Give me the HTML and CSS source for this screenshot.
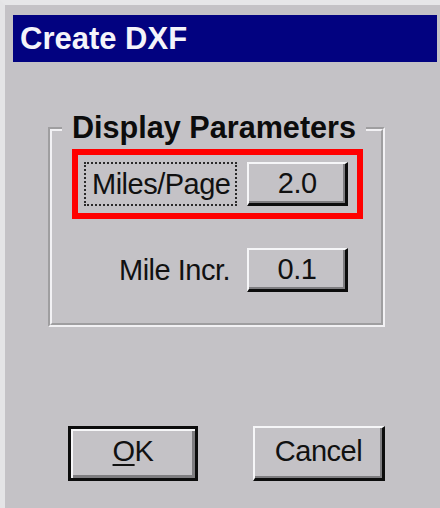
FILE: index.html
```html
<!DOCTYPE html>
<html lang="en">
<head>
<meta charset="utf-8">
<title>Create DXF</title>
<link rel="stylesheet" href="styles.css">
</head>
<body>
<div class="window">
  <div class="titlebar">Create DXF</div>

  <fieldset class="group">
    <legend class="group-title">Display Parameters</legend>

    <div class="param-row highlighted">
      <span class="param-label focused">Miles/Page</span>
      <button class="btn value-btn" type="button">2.0</button>
    </div>

    <div class="param-row">
      <span class="param-label">Mile Incr.</span>
      <button class="btn value-btn" type="button">0.1</button>
    </div>
  </fieldset>

  <div class="actions">
    <button class="btn action-btn default" type="button"><span class="mnemonic">O</span>K</button>
    <button class="btn action-btn" type="button">Cancel</button>
  </div>
</div>
</body>
</html>
```

FILE: styles.css
```css
* {
  box-sizing: border-box;
}

html,
body {
  margin: 0;
  padding: 0;
  width: 440px;
  height: 508px;
  overflow: hidden;
  background: #c4c2c6;
}

body {
  font-family: "Liberation Sans", Arial, sans-serif;
  color: #111;
}

/* dialog frame: light top/left edge */
.window {
  height: 508px;
  border-top: 5px solid #e6e6e8;
  border-left: 5px solid #e4e4e6;
  display: flex;
  flex-direction: column;
  align-items: flex-start;
}

.titlebar {
  align-self: stretch;
  margin: 10px 3px 0 8px;
  height: 47px;
  background: #020280;
  color: #f4f4fa;
  font-weight: bold;
  font-size: 31px;
  line-height: 47px;
  padding-left: 7px;
}

/* etched group box */
.group {
  margin: 50px 0 0 43px;
  width: 337px;
  padding: 3px 0 18px 0;
  border: 4px groove #f2f1f4;
  min-inline-size: 0;
}

.group-title {
  margin-left: 10px;
  padding: 0 10px 4px 10px;
  font-weight: bold;
  font-size: 30.6px;
  line-height: 30px;
  color: #0c0c0c;
}

.param-row {
  margin-left: 20px;
  width: 291px;
  border: 6px solid transparent;
  padding: 7px 9px 7px 6px;
  display: flex;
  align-items: center;
  justify-content: flex-end;
  gap: 10px;
}

.param-row + .param-row {
  margin-top: 16px;
}

.param-row.highlighted {
  border-color: #ff0000;
}

.param-label {
  font-size: 29px;
  letter-spacing: -0.5px;
  line-height: 40px;
  padding: 0 5px 0 6px;
  border: 2px dotted transparent;
  white-space: nowrap;
}

.param-label.focused {
  border-color: #2a2a2a;
}

/* classic raised 3D push button */
.btn {
  font-family: "Liberation Sans", Arial, sans-serif;
  font-size: 29px;
  letter-spacing: -0.5px;
  color: #111;
  background: #c4c2c6;
  border-style: solid;
  border-width: 2px 3px 3px 2px;
  border-color: #f6f6f8 #0c0c0c #0c0c0c #f6f6f8;
  box-shadow: inset -2px -2px 0 #7e7d80;
  padding: 0;
  margin: 0;
  display: flex;
  align-items: center;
  justify-content: center;
}

.value-btn {
  width: 101px;
  height: 44px;
}

.actions {
  margin: 99px 0 0 63px;
  display: flex;
  gap: 55px;
}

.action-btn {
  width: 132px;
  height: 55px;
  padding-bottom: 4px;
}

/* default button gets an extra black frame */
.action-btn.default {
  width: 130px;
  border: 3px solid #0c0c0c;
  box-shadow: inset 2px 2px 0 #f6f6f8, inset -3px -3px 0 #7e7d80;
}

.mnemonic {
  text-decoration: underline;
  text-underline-offset: 3px;
}
```
